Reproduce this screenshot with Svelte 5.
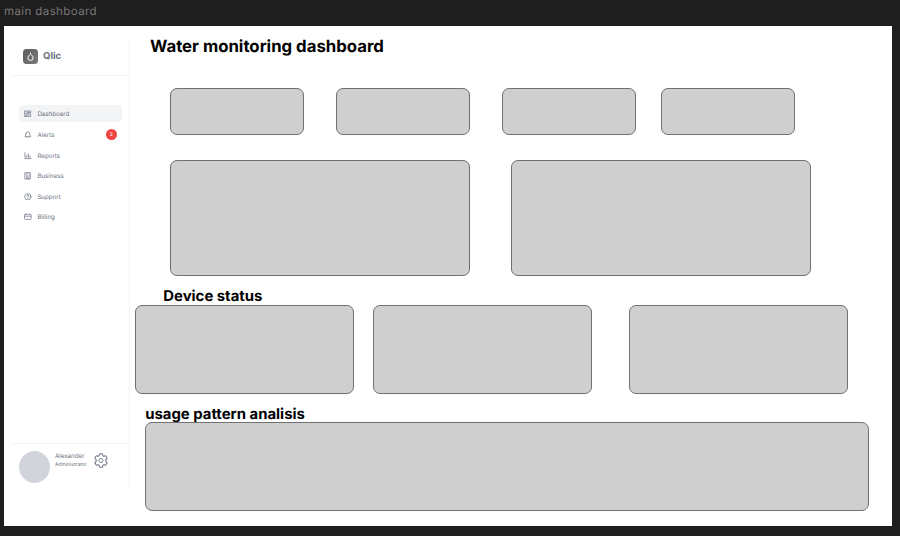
<script>
  const items = [
    { label: 'Dashboard', icon: 'grid', active: true },
    { label: 'Alerts', icon: 'bell', badge: 3 },
    { label: 'Reports', icon: 'chart' },
    { label: 'Business', icon: 'building' },
    { label: 'Support', icon: 'help' },
    { label: 'Billing', icon: 'card' }
  ];
</script>

<div class="canvas">
  <div class="frame-name">main dashboard</div>
  <div class="frame">
    <aside>
      <div class="brand">
        <span class="logo">
          <svg viewBox="0 0 15 15" width="15" height="15" fill="none" stroke="#fff" stroke-width="1">
            <path d="M7.5 3.6v1.5M7.5 5.1C6.7 6 4.9 7.2 4.9 8.9a2.6 2.6 0 0 0 5.2 0C10.1 7.2 8.3 6 7.5 5.1Z" />
          </svg>
        </span>
        <span class="brand-name">Qlic</span>
      </div>
      <nav>
        {#each items as item}
          <a class="item" class:active={item.active} class:alert={item.badge}>
            <svg viewBox="0 0 24 24" width="7.6" height="7.6" fill="none" stroke="#6b7280" stroke-width="2.3" stroke-linecap="round" stroke-linejoin="round">
              {#if item.icon === 'grid'}
                <path d="M3 3h7v9H3zM14 3h7v5h-7zM14 12h7v9h-7zM3 16h7v5H3z" />
              {:else if item.icon === 'bell'}
                <path d="M6 9a6 6 0 0 1 12 0c0 6 3 7 3 9H3c0-2 3-3 3-9M10 22h4" />
              {:else if item.icon === 'chart'}
                <path d="M3 2v19h19M9 17v-6M14 17V6M19 17v-4" />
              {:else if item.icon === 'building'}
                <path d="M4 2h16v20H4zM9 22v-4h6v4M8 6h.1M12 6h.1M16 6h.1M8 10h.1M12 10h.1M16 10h.1M8 14h.1M12 14h.1M16 14h.1" />
              {:else if item.icon === 'help'}
                <circle cx="12" cy="12" r="10" />
                <path d="M9 9a3 3 0 0 1 6 1c0 2-3 2-3 4M12 17.5h.1" />
              {:else}
                <rect x="1.5" y="4" width="21" height="16" rx="3" />
                <path d="M2 10h20" />
              {/if}
            </svg>
            <span>{item.label}</span>
            {#if item.badge}<b>{item.badge}</b>{/if}
          </a>
        {/each}
      </nav>
      <div class="user">
        <div class="avatar"></div>
        <div class="who">
          <div class="name">Alexander</div>
          <div class="role">Administrator</div>
        </div>
        <svg viewBox="0 0 24 24" width="14" height="15" fill="none" stroke="#6b7280" stroke-width="1.4" stroke-linejoin="round" preserveAspectRatio="none">
          <path d="M9.6 3.9c.1-.5.5-.9 1.1-.9h2.6c.5 0 1 .4 1.1.9l.2 1.3c.1.4.3.7.6.9l.3.1c.3.2.7.2 1.1.1l1.2-.5c.5-.2 1.1 0 1.4.5l1.3 2.2c.3.5.2 1.1-.3 1.4l-1 .8c-.3.2-.4.6-.4 1v.6c0 .4.1.7.4 1l1 .8c.4.4.5 1 .3 1.4l-1.3 2.2c-.3.5-.9.7-1.4.5l-1.2-.5c-.4-.1-.8-.1-1.1.1l-.3.1c-.3.2-.5.5-.6.9l-.2 1.3c-.1.5-.5.9-1.1.9h-2.6c-.5 0-1-.4-1.1-.9l-.2-1.3c-.1-.4-.3-.7-.6-.9l-.3-.1c-.3-.2-.7-.2-1.1-.1l-1.2.5c-.5.2-1.1 0-1.4-.5l-1.3-2.2c-.3-.5-.2-1.1.3-1.4l1-.8c.3-.2.4-.6.4-1v-.6c0-.4-.1-.7-.4-1l-1-.8c-.4-.4-.5-1-.3-1.4l1.3-2.2c.3-.5.9-.7 1.4-.5l1.2.5c.4.1.8.1 1.1-.1l.3-.1c.3-.2.5-.5.6-.9z" transform="translate(-2.4 -2.4) scale(1.2)" />
          <circle cx="12" cy="12" r="3.4" />
        </svg>
      </div>
    </aside>

    <main>
      <h1>Water monitoring dashboard</h1>
      <div class="row stats">
        <div class="box"></div>
        <div class="box"></div>
        <div class="box"></div>
        <div class="box last"></div>
      </div>
      <div class="row charts">
        <div class="box"></div>
        <div class="box"></div>
      </div>
      <h2 class="device">Device status</h2>
      <div class="row devices">
        <div class="box"></div>
        <div class="box"></div>
        <div class="box last"></div>
      </div>
      <h2 class="usage">usage pattern analisis</h2>
      <div class="row pattern"><div class="box"></div></div>
    </main>
  </div>
</div>

<style>
  :global(body) { margin: 0; background: #1e1e1e; }
  .canvas {
    width: 900px; height: 536px; box-sizing: border-box; padding-left: 4px;
    background: #1e1e1e; overflow: hidden; font-family: Inter, sans-serif;
    text-rendering: geometricPrecision;
  }
  .frame-name {
    height: 26.3px; line-height: 23px; font-size: 11.5px; color: #777;
    letter-spacing: 0.4px; white-space: nowrap;
  }
  .frame { width: 888px; height: 499.4px; background: #fff; display: flex; }
  aside {
    width: 117.5px; height: 449px; margin: 12px 0 0 7px; box-sizing: content-box;
    border-right: 1px solid #f3f4f6; display: flex; flex-direction: column; flex: none;
  }
  .brand {
    height: 37.5px; box-sizing: border-box; border-bottom: 1px solid #f3f4f6;
    display: flex; padding: 10.5px 0 0 11.5px; gap: 5.5px;
  }
  .logo {
    width: 15px; height: 15px; border-radius: 3.5px; display: block;
    background: linear-gradient(135deg, #5c5c5c, #7b7b7b);
  }
  .logo svg { display: block; }
  .brand-name { font-size: 9.5px; font-weight: 700; line-height: 16.5px; color: #6b7280; }
  nav { padding: 29.5px 7px 0 8px; display: flex; flex-direction: column; }
  .item {
    height: 16.4px; margin-bottom: 4px; border-radius: 3.5px; padding: 0 5px 0 5.3px;
    display: flex; align-items: center; font-size: 6.2px; color: #6b7280;
  }
  .item svg { margin-right: 5.5px; flex: none; }
  .item span { padding-top: 1.2px; }
  .item.active { background: #f3f4f6; }
  .item.alert { height: 18px; }
  .item b {
    margin-left: auto; width: 11px; height: 11px; border-radius: 50%; flex: none;
    background: #ef4444; color: #fff; font-size: 5.2px; font-weight: 400;
    line-height: 12.4px; text-align: center;
  }
  .user {
    margin-top: auto; height: 44.5px; box-sizing: border-box;
    border-top: 1px solid #f3f4f6; display: flex; padding: 7px 0 0 8px;
  }
  .avatar { width: 31px; height: 32px; border-radius: 50%; background: #d1d5db; flex: none; }
  .who { width: 32px; margin: 2px 7px 0 5px; white-space: nowrap; color: #6b7280; }
  .name { font-size: 6.2px; line-height: 8.5px; }
  .role { font-size: 5px; line-height: 8px; }
  .user > svg { margin-top: 2px; flex: none; }

  main { flex: 1; min-width: 0; }
  h1, h2 { margin: 0; font-weight: 700; color: #000; white-space: nowrap; }
  h1 { font-size: 16.75px; line-height: 22px; padding: 9.7px 0 0 20.5px; height: 52.1px; }
  h2 { font-size: 14.9px; line-height: 19px; }
  .row { display: flex; }
  .box {
    box-sizing: border-box; background: #cfcfcf; border: 1px solid #707070;
    border-radius: 7px; flex: none;
  }
  .stats { padding-left: 40.5px; gap: 32px; }
  .stats .box { width: 134px; height: 47px; }
  .stats .last { margin-left: -7px; }
  .charts { padding: 25px 0 0 40.5px; gap: 41px; }
  .charts .box { width: 300px; height: 116px; }
  .device { padding: 11px 0 0 33.8px; height: 18.3px; }
  .devices { padding-left: 5.2px; gap: 18.9px; }
  .devices .box { width: 219.2px; height: 88.6px; }
  .devices .last { margin-left: 18px; }
  .usage { padding: 11.2px 0 0 15.7px; height: 17.2px; }
  .pattern { padding-left: 15.5px; }
  .pattern .box { width: 724px; height: 88.6px; }
</style>
